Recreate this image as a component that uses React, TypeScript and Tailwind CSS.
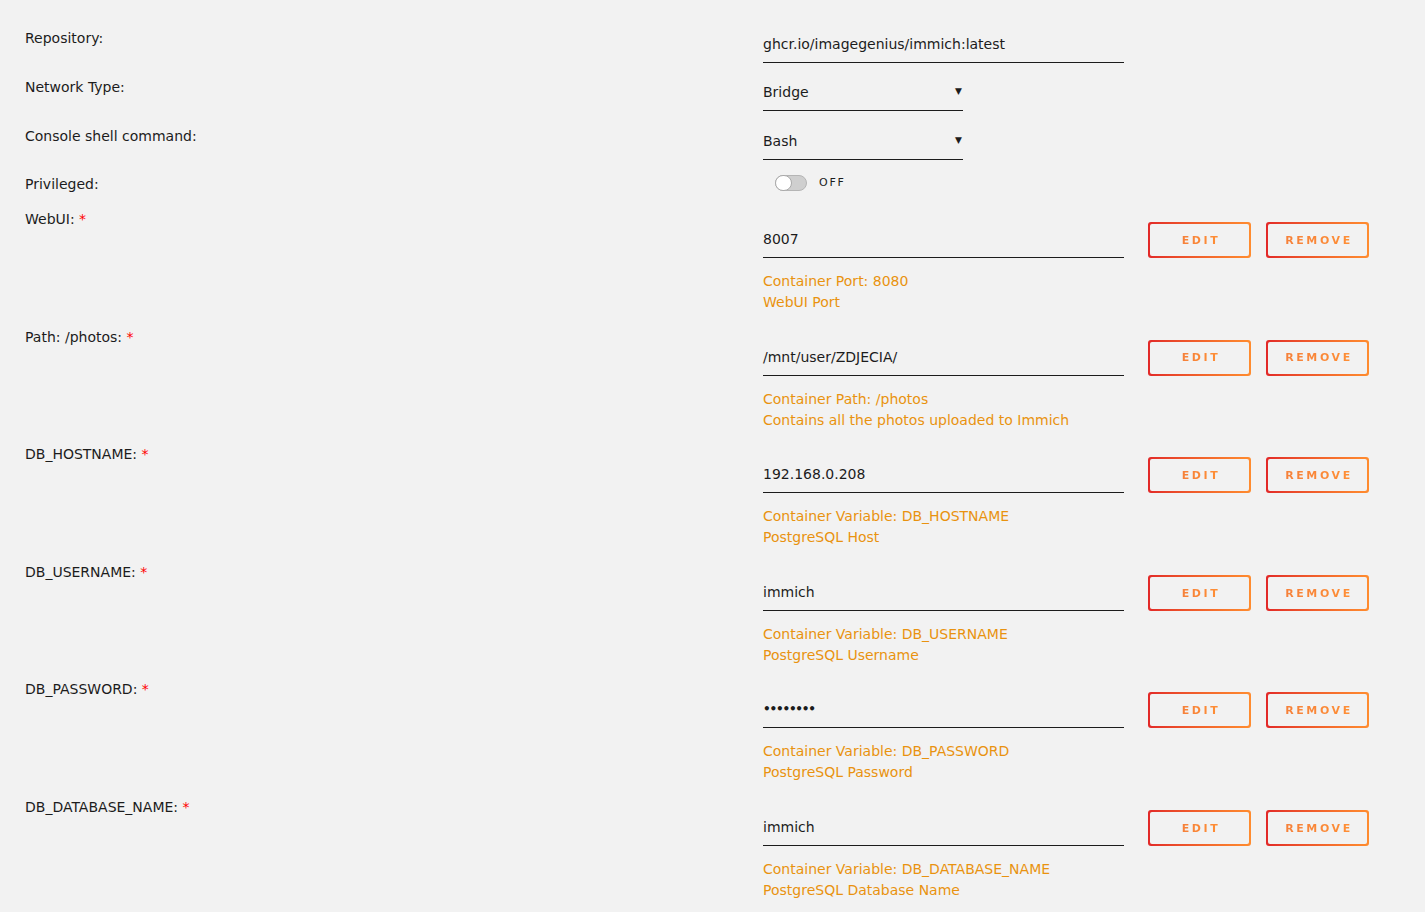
import React from "react";

type Field = {
  label: string;
  value: string;
  help: [string, string];
  secret?: boolean;
};

const fields: Field[] = [
  { label: "WebUI:", value: "8007", help: ["Container Port: 8080", "WebUI Port"] },
  {
    label: "Path: /photos:",
    value: "/mnt/user/ZDJECIA/",
    help: ["Container Path: /photos", "Contains all the photos uploaded to Immich"],
  },
  {
    label: "DB_HOSTNAME:",
    value: "192.168.0.208",
    help: ["Container Variable: DB_HOSTNAME", "PostgreSQL Host"],
  },
  {
    label: "DB_USERNAME:",
    value: "immich",
    help: ["Container Variable: DB_USERNAME", "PostgreSQL Username"],
  },
  {
    label: "DB_PASSWORD:",
    value: "••••••••",
    help: ["Container Variable: DB_PASSWORD", "PostgreSQL Password"],
    secret: true,
  },
  {
    label: "DB_DATABASE_NAME:",
    value: "immich",
    help: ["Container Variable: DB_DATABASE_NAME", "PostgreSQL Database Name"],
  },
];

function GradientButton({ children }: { children: string }) {
  return (
    <div className="h-[36px] w-[103px] rounded-[3px] bg-gradient-to-r from-[#e22828] to-[#ff8c2f] p-[2px]">
      <div className="flex h-full w-full items-center justify-center rounded-[2px] bg-[#f2f2f2]">
        <span className="bg-gradient-to-r from-[#f5803a] to-[#ff8f35] bg-clip-text pl-[3px] pt-[2px] text-[11px] font-bold tracking-[2.6px] text-transparent">
          {children}
        </span>
      </div>
    </div>
  );
}

function TextInput({ value, secret }: { value: string; secret?: boolean }) {
  return (
    <div className="h-[33px] w-[361px] border-b border-[#1c1c1c] pt-[4px] leading-[20px] text-[#1c1c1c]">
      {secret ? (
        <span className="relative top-[-1px] text-[12px] font-bold tracking-[-1.2px]">{value}</span>
      ) : (
        value
      )}
    </div>
  );
}

function SelectInput({ value }: { value: string }) {
  return (
    <div className="flex h-[33px] w-[200px] items-start justify-between border-b border-[#1c1c1c] pt-[4px] leading-[20px] text-[#1c1c1c]">
      <span>{value}</span>
      <span className="pr-[1px] text-[9px] leading-[18px]">▼</span>
    </div>
  );
}

function TopRow({ label, children, pad }: { label: string; children: React.ReactNode; pad: string }) {
  return (
    <div className="flex h-[49px]">
      <div className="w-[738px] pt-[9px] leading-[20px]">{label}</div>
      <div className={pad}>{children}</div>
    </div>
  );
}

export default function App() {
  return (
    <div
      className="min-h-[912px] w-full overflow-hidden bg-[#f2f2f2] pl-[25px] pt-[19px] text-[14px] text-[#1c1c1c]"
      style={{ fontFamily: '"DejaVu Sans", sans-serif' }}
    >
      <TopRow label="Repository:" pad="pt-[11px]">
        <TextInput value="ghcr.io/imagegenius/immich:latest" />
      </TopRow>
      <TopRow label="Network Type:" pad="pt-[10px]">
        <SelectInput value="Bridge" />
      </TopRow>
      <TopRow label="Console shell command:" pad="pt-[10px]">
        <SelectInput value="Bash" />
      </TopRow>

      <div className="flex h-[34px]">
        <div className="w-[738px] pt-[8px] leading-[20px]">Privileged:</div>
        <div className="flex items-center gap-[12px] pl-[12px]">
          <div className="relative h-[16px] w-[32px] rounded-full border border-[#b5b5b5] bg-[#cfcfcf]">
            <div className="absolute left-[-1px] top-[-1px] h-[16px] w-[17px] rounded-full border border-[#aaaaaa] bg-white" />
          </div>
          <span className="text-[11px] tracking-[1.8px] text-[#1c1c1c]">OFF</span>
        </div>
      </div>

      {fields.map((f) => (
        <div key={f.label} className="flex h-[117.6px]">
          <div className="w-[738px] pt-[9px] leading-[20px]">
            {f.label} <span className="text-[#ff0000]">*</span>
          </div>
          <div className="pt-[22px]">
            <div className="flex items-end">
              <TextInput value={f.value} secret={f.secret} />
              <div className="ml-[24px] flex gap-[15px]">
                <GradientButton>EDIT</GradientButton>
                <GradientButton>REMOVE</GradientButton>
              </div>
            </div>
            <div className="mt-[13px] leading-[21px] text-[#e9920f]">
              <div>{f.help[0]}</div>
              <div>{f.help[1]}</div>
            </div>
          </div>
        </div>
      ))}
    </div>
  );
}
